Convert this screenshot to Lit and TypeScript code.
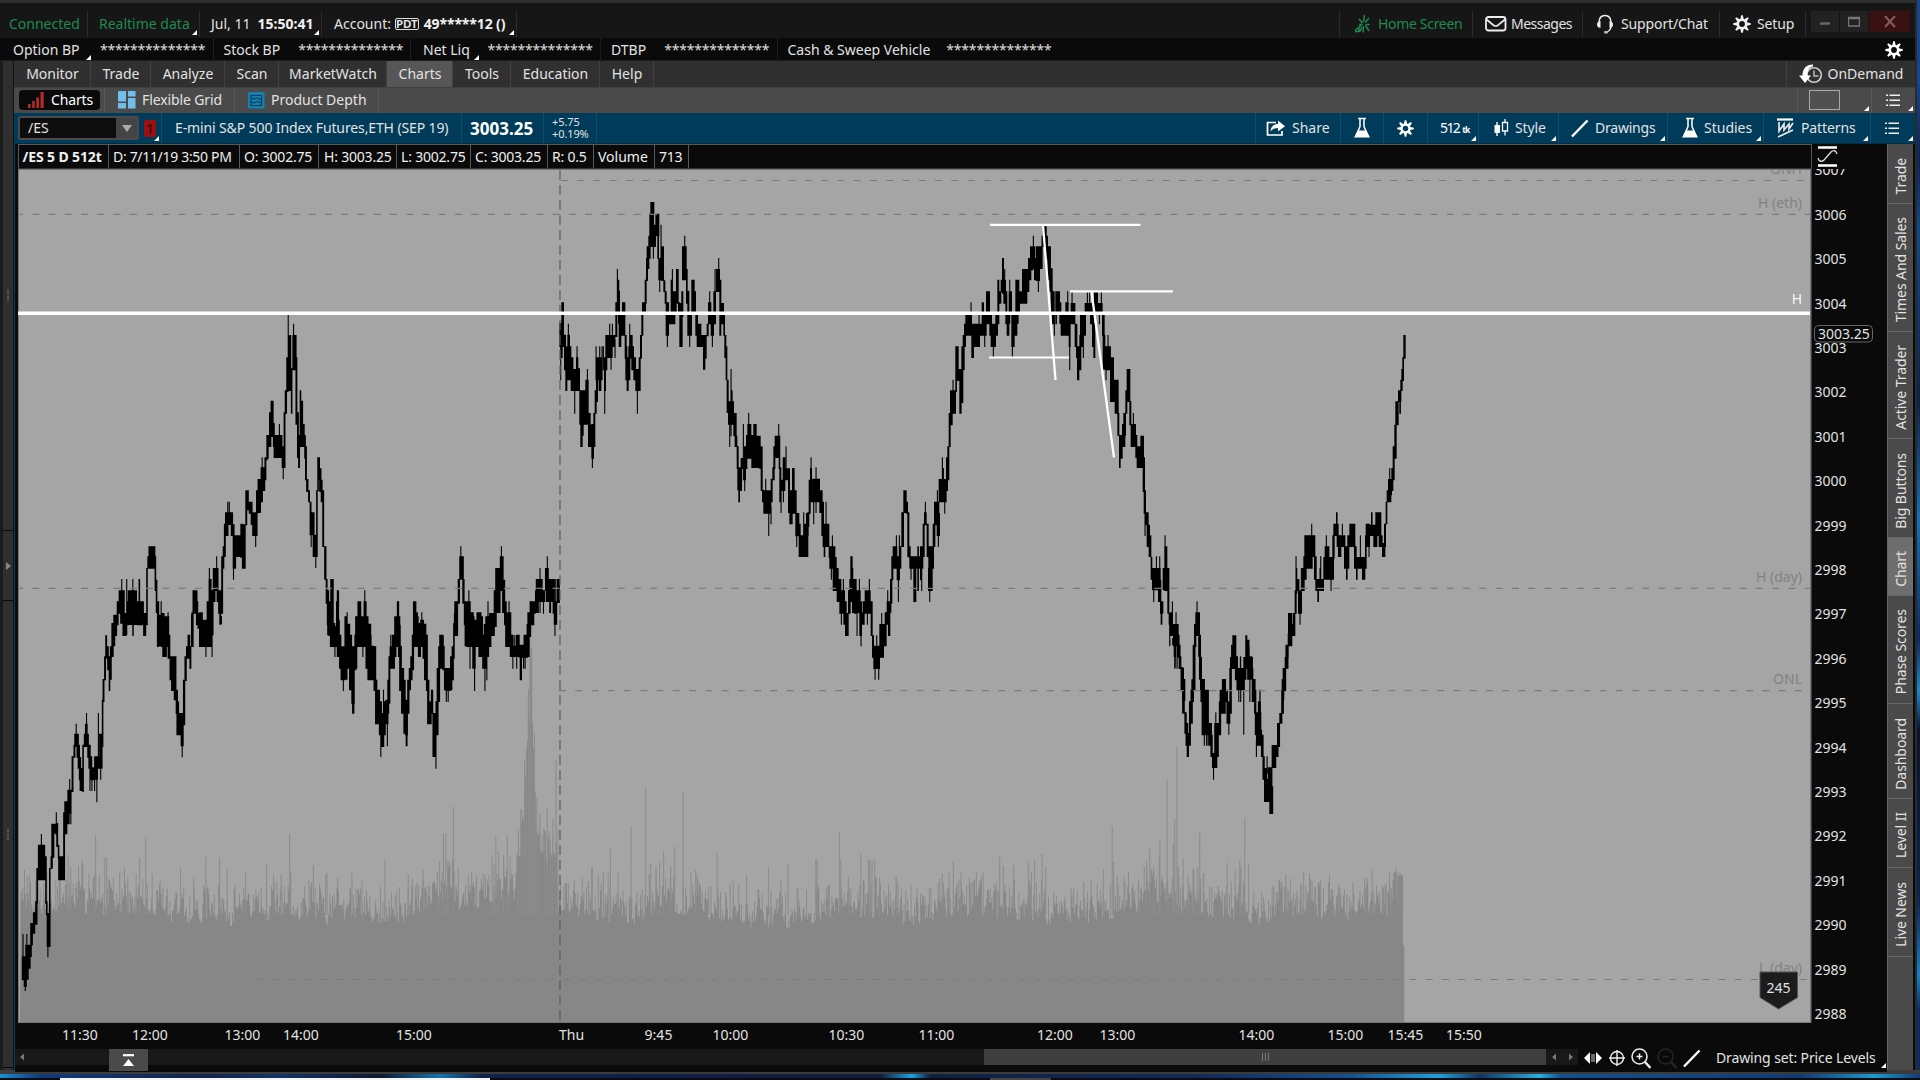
import { LitElement, html, svg, css, nothing } from "lit";
import { customElement } from "lit/decorators.js";

/* ---------- price trace ----------
   Each section has an origin and a scale; items are "x1 x2 top bottom" bars or "x top bottom" wicks. */
type Section = { ox: number; oy: number; sx: number; items: string };

const PRICE: Section[] = [
  { ox: 0, oy: 620, sx: 2.613, items: `60 943 1080,57 63 1010 1080,62 70 1010 1100,66 1010 1112,66 75 975 1078,70 943 1078,74 80 975 1045,79 86 910 975,79 82 910 1010,86 92 878 940,92 98 845 913,95 99 745 850,99 105 675 780,105 112 675 780,108 643 780,112 118 675 780,118 122 710 850,120 124 845 885,122 128 880 980,125 880 1011,128 132 745 980,132 138 710 745,134 142 612 712,142 147 612 640,147 578 645,147 152 610 680,151 155 675 715,152 170 710 780,165 170 578 715,168 176 545 642,176 182 510 612,182 478 540,181 187 510 580,185 560 612,187 192 410 515,192 197 375 412,194 203 342 380,199 312 380,200 206 342 412,203 209 375 445,206 212 412 480,208 218 445 512,215 219 375 515,219 223 342 380,222 229 312 380,226 280 380,228 232 342 412,231 237 375 445,235 241 410 480,235 445 512,238 247 443 480,240 445 512,247 445 512,246 256 410 478,253 445 546,254 262 412 445,257 280 445,259 268 342 445,263 420 478,266 270 240 380,268 273 178 245,272 277 110 180,275 280 47 115,280 284 80 150,284 288 110 212,287 292 80 178,291 297 10 110,296 305 -15 45,
  297 300 -15 78,320 329 0 46,330 0 20,334 372 0 14,348 0 46,374 382 0 46,410 424 -15 78,424 436 -10 110,436 442 -10 80,438 445 45 115,443 456 110 180,447 455 115 212,454 461 110 240,459 465 210 280,461 468 245 345,466 474 280 345,472 480 280 378,476 300 411,478 484 180 315,482 488 110 182,486 492 80 115,490 497 45 115,495 500 80 145,499 503 -15 80,520 542 0 78,538 20 110,540 548 -10 78,550 556 -10 46,554 0 110,573 580 -10 12,
  855 864 -10 45,862 872 -10 80,872 882 20 80,875 20 110,880 888 0 110,886 892 45 145,890 902 80 180,897 100 212,900 908 -10 178,905 915 12 145,912 920 45 210,918 927 80 250,920 926 100 280,926 931 45 150,928 936 -10 80,932 0 145,936 948 -10 80,945 957 -10 80,948 0 110,955 963 -10 145,960 970 12 180,968 978 78 180,976 983 80 212,980 986 180 312,986 993 210 312,990 998 245 345,995 280 410,996 1004 280 380,1002 210 300,1003 1008 245 345,1007 1015 240 312,1012 280 378,1012 1017 180 280,1015 1020 110 250,1018 1025 80 145,1021 45 100,1024 1032 45 145,1030 1036 -10 110,1035 1042 -10 20,1040 1046 -10 110,1043 1050 78 212,1048 1056 145 280,1054 1060 180 340,1058 1066 240 345,1060 1065 240 378,1064 1070 180 280,1068 1074 145 210,1072 1078 110 180,1076 1082 45 150,1080 1088 -10 45,1084 1094 -10 80,1092 1100 12 110,1098 1108 0 80,1104 1112 12 115,1108 1114 12 180,1113 1118 45 212,1116 1122 180 312,1120 1128 245 312,1126 1132 210 280,1130 1136 280 410,1134 1139 280 410,1139 300 445,1138 1143 245 345,1141 1146 145 345,1145 1150 80 245,1149 45 100,1150 1158 45 145,1156 1162 78 150,1160 1166 145 210,1164 1178 145 212,1166 200 245,1171 200 245,1176 1182 110 210,1180 1186 80 180,1184 1188 12 115,1186 1196 -20 45,1214 1228 -10 78,1222 1240 -10 80,1228 0 145,1234 1243 0 145,1240 80 212,1242 1252 0 80,1250 1262 -10 110,1260 1273 45 145,1267 100 212,1268 1278 -10 110,1272 80 180,1276 1284 -10 80,1284 1294 -10 15,1320 1328 -10 45,1326 1334 -10 80,1332 1342 45 110,1340 80 145,1338 1350 78 110,1350 80 145,1348 1358 45 110,1356 1374 75 112,1358 1364 100 180,1368 100 145,1368 1380 45 112,1372 45 145,1378 1384 12 110,1382 1394 -10 14,1450 0 46` },
  { ox: 0, oy: 180, sx: 2.613, items: `275 280 1367 1400,291 297 1333 1390,297 306 1333 1367,305 310 1265 1335,310 316 1232 1300,314 326 1232 1330,318 1198 1300,320 330 1300 1367,331 1198 1365,330 336 1265 1335,334 358 1232 1332,347 1198 1367,358 368 1265 1335,362 366 1198 1332,366 376 1265 1335,374 382 1300 1367,382 386 1165 1335,385 390 1130 1165,388 406 1100 1165,404 408 1130 1232,407 411 1200 1298,410 416 1265 1400,421 1265 1400,420 430 1300 1400,430 439 1333 1400,439 1298 1400,491 494 1367 1400,500 506 1298 1400,503 516 1232 1300,512 518 1265 1335,516 522 1300 1345,520 530 1298 1400,528 540 1330 1400,540 547 1265 1400,547 1165 1400,545 553 1198 1400,552 558 1232 1365,556 568 1165 1232,558 563 1165 1265,566 1130 1200,566 571 1165 1265,570 578 1232 1300,573 578 1265 1333,578 583 1130 1300,582 586 1100 1165,585 590 1032 1130,588 597 998 1067,595 966 1030,599 966 1030,597 606 998 1034,603 609 998 1067,608 613 1034 1165,610 1100 1198,612 629 1067 1130,612 617 1067 1165,628 634 1032 1132,632 642 1034 1165,641 646 932 1035,646 650 932 990,650 657 966 1000,655 660 966 1034,659 673 998 1067,668 1020 1100,669 674 932 1000,673 682 898 998,681 687 863 966,685 833 900,686 693 863 932,691 696 833 900,695 698 833 840,696 702 766 835,703 709 698 800,700 704 766 800,707 715 663 770,713 718 730 800,715 734 766 833,730 733 800,733 738 766 833,736 744 800 863,740 840 897,741 746 698 863,744 750 632 700,748 754 533 635,753 405 540,752 761 466 632,760 764 566 700,764 768 466 570,767 432 540,766 775 466 570,772 777 533 733,776 781 698 833,779 784 766 863,783 787 632 800,786 792 663 800,792 796 733 800,797 802 800 900,795 799 766 835,800 806 898 935,805 810 932 966,809 814 966 1065,813 1000 1100,812 822 998 1065,817 828 1065 1130,825 1100 1163,826 830 932 1130,829 832 833 932,834 840 866 935,838 843 900 966,842 847 932 1100,832 836 833 900,847 853 1100 1198,851 856 1198 1270,854 860 1232 1335,858 864 1265 1367,863 872 1198 1365,866 872 1198 1400,870 876 1330 1400,880 886 1232 1370,878 884 1265 1400,886 889 1365 1400,900 914 1365 1400,907 1298 1400,905 912 1333 1400,928 934 1365 1400,934 944 1265 1400,944 950 1330 1400,953 1232 1400,950 958 1265 1400,957 963 1333 1400,966 971 1367 1400,1021 1367 1400,1033 1037 1333 1400,1037 1043 1265 1400,1043 1046 1335 1400,1079 1088 1265 1400,1086 1092 1298 1400,1090 1108 1330 1400,1102 1298 1400,1106 1110 1333 1400,1110 1116 1365 1400,1148 1151 1367 1400,1158 1367 1400,1184 1188 1330 1400,1187 1197 1265 1367,1196 1202 1198 1270,1200 1212 1130 1198,1204 1100 1150,1208 1214 1198 1270,1212 1220 1265 1335,1218 1230 1265 1400,1225 1232 1300,1230 1238 1298 1400,1236 1246 1335 1400,1245 1258 1298 1400,1256 1265 1365 1400,1264 1275 1333 1400,1275 1265 1400,1278 1293 1300 1367,1290 1298 1232 1340,1294 1308 1165 1298,1306 1316 1130 1232,1310 1100 1165,1312 1320 1200 1298,1317 1324 1265 1335,1320 1336 1298 1400,1330 1265 1330,1345 1367 1400,1350 1367 1400,1368 1375 1367 1400,1376 1382 1333 1400,1378 1388 1298 1370,1384 1396 1265 1335,1390 1400 1265 1300,1398 1424 1232 1265,1400 1408 1198 1298,1411 1165 1298,1406 1418 1198 1265,1420 1232 1300,1424 1434 1165 1232,1430 1130 1200,1426 1448 1198 1265,1435 1440 1198 1298,1444 1450 1198 1300,1447 1456 1265 1333,1450 1300 1367,1452 1198 1265,1455 1463 1198 1268` },
  { ox: 520, oy: 180, sx: 3, items: `118 126 430 500,122 128 500 533,122 430 600,124 132 368 500,132 138 465 570,136 142 500 632,142 150 465 600,145 432 500,149 154 500 600,152 160 533 632,158 168 568 632,164 600 700,168 175 533 632,171 500 600,172 180 566 632,178 184 632 733,181 188 632 800,186 191 632 766,190 206 632 733,196 206 600 640,202 568 650,204 212 700 800,210 226 735 800,214 222 733 835,217 800 863,220 226 700 800,224 230 632 700,228 234 533 665,228 500 600,232 246 533 600,236 244 570 632,239 500 600,246 500 600,250 500 570,252 258 533 632,254 570 700,256 262 466 570,260 286 466 500,262 278 466 533,269 432 500,277 432 500,273 500 568,285 480 533,286 292 368 470,292 268 400,293 297 300 400,294 300 333 430,296 304 400 500,302 308 400 466,306 316 368 466,314 320 466 535,316 322 500 600,320 326 533 632,325 331 500 600,329 432 535,329 338 466 535,334 342 500 570,340 348 533 600,346 352 568 632,352 570 700,350 360 568 632,356 362 533 632,360 366 466 535,364 370 400 466,366 378 368 400,374 380 300 370,378 384 235 302,380 388 200 266,385 392 168 235,388 402 102 200,391 403 67 102,400 180 235,402 408 135 200,406 418 102 168,412 417 102 235,415 424 235 300,419 270 335,423 135 300,424 432 200 302,430 436 302 335,434 440 335 370,437 447 368 466,442 430 500,446 466 400 432,452 456 300 432,457 268 432,458 470 335 400,468 476 268 370,474 480 368 400,478 488 400 500,480 483 370 410,484 490 335 410,486 500 200 300,494 168 230,498 503 268 370,502 508 333 466,509 400 500,506 516 400 466,514 524 300 400,522 528 335 400,526 534 400 466,530 544 432 500,540 556 466 500,549 556 500 568,555 560 466 535,560 566 432 468,564 574 368 432,569 335 400,572 582 400 466,577 430 500,580 588 335 432,585 268 400,588 600 268 335,596 235 300,598 604 300 466,602 612 370 432,610 615 400 466,613 619 466 533,617 622 500 600,620 626 600 698,624 642 665 733,633 568 700,636 632 700,629 700 800,633 700 768,640 650 700 768,644 652 768 800,650 656 800 866,652 660 863 930,655 660 900 966,660 666 863 932,662 682 835 866,670 733 900,672 678 800 900,674 850 932,678 694 766 835,682 694 733 835,686 700 770,694 710 766 863,700 710 733 863,708 722 768 863,718 724 800 866,722 728 800 932,726 732 930 966,730 754 932 1000,737 897 960,746 970 1067,753 980 1032,752 758 897 966,757 764 863 900,760 766 800 866,764 778 768 833,776 733 800,776 780 768 866,778 784 863 966,783 900 998,784 794 900 932,788 796 833 932,790 900 966,794 810 866 900,798 800 900,804 810 866 998,808 818 932 1032,816 824 865 1000,822 830 932 1000,826 838 1000 1068,830 1050 1100,836 842 1032 1130,840 860 1067 1130,851 998 1130,852 866 1032 1067,858 865 1000 1130,862 868 998 1040,866 872 900 1000,870 876 865 966,873 833 900,874 900 897 966,881 940 1032,888 863 998,898 908 932 998,904 912 966 1067,908 928 1032 1100,911 915 1060 1130,918 966 1100,926 946 1100 1132,928 940 1100 1165,934 1150 1198,937 1067 1130,938 950 1132 1232,946 956 1165 1232,950 964 1198 1265,958 975 1232 1300,964 1280 1333,970 1198 1260,970 980 1265 1333,975 986 1300 1367,984 992 1232 1300,988 1002 1198 1265,991 998 1130 1200,998 1165 1200,996 1022 1232 1298,1002 1010 1198 1300,1011 1280 1367,1018 1198 1300,1018 1034 1298 1333,1018 1026 1265 1367,1023 1350 1398,1028 1054 1265 1300,1034 1052 1232 1270,1042 1290 1333,1048 1198 1240,1052 1058 1265 1367,1056 1062 1367 1432,1060 1080 1398 1466,1065 1450 1498,1070 1367 1420,1076 1450 1498,1078 1092 1333 1432,1085 1300 1340,1090 1100 1333 1398,1094 1106 1298 1333,1100 1114 1265 1298,1103 1232 1290,1104 1111 1298 1367,1110 1117 1198 1270,1114 1120 1130 1200,1118 1132 1100 1165,1129 1067 1120,1130 1138 1130 1200,1135 1180 1265,1138 1067 1200,1138 1144 1100 1165,1144 1152 998 1100,1150 1160 932 998,1158 1164 966 1000,1162 1168 998 1130,1166 1172 1100 1132,1168 1200 1130 1165,1173 1150 1198,1180 1189 1165 1265,1192 1196 1100 1232,1200 1206 1132 1200,1200 1210 1100 1165,1205 1165 1232,1208 1214 1032 1130,1212 1220 998 1035,1216 966 1010,1220 1226 1032 1130,1224 1238 1165 1232,1225 1242 1100 1165,1229 1200 1265,1238 1246 1032 1100,1242 1258 966 1035,1252 932 1000,1250 1260 1000 1067,1255 1050 1100,1256 1280 898 966,1267 833 900,1274 950 1000,1270 865 920,1278 1284 833 932,1282 1288 800 900,1286 1292 700 800,1290 1298 632 735,1296 1308 632 700,1299 600 660,1306 1316 500 600,1306 1309 600 635,1312 1326 568 602,1318 1325 600 700,1324 1330 500 668,1328 1334 466 570,1332 1338 432 500,1336 1356 400 466,1353 368 420,1354 1362 432 533,1360 1380 432 500,1377 400 466,1380 1390 432 466,1385 1392 368 432,1390 1400 400 466,1394 430 500,1398 1410 335 432,1408 1416 400 466,1412 1428 432 500,1420 470 530,1426 1434 400 466,1432 1438 300 432,1438 1444 335 370,1442 1458 300 335,1446 1452 235 340,1454 268 370,1450 1462 335 370,1456 1462 368 432,1460 1468 400 466,1469 300 430,1466 1476 335 400,1474 1484 400 500,1477 470 530,1482 1492 400 466,1486 1496 300 430` },
  { ox: 940, oy: 180, sx: 3, items: `216 228 400 466,226 238 300 400,232 246 335 370,238 350 400,244 260 335 368,246 262 268 370,256 268 268 335,264 274 235 300,270 280 200 270,280 168 240,278 286 200 266,282 292 235 300,288 300 200 302,295 280 335,298 308 200 266,306 168 240,308 320 140 200,318 324 168 235,322 330 200 300,328 332 200 335,332 338 266 400,336 344 335 432,343 400 466,346 350 400 432,346 360 335 400,358 364 368 430,362 392 400 466,376 386 368 410,383 335 420,386 392 430 500,389 460 570,392 406 370 432,396 335 400,404 412 432 500,408 420 500 533,411 418 530 600,418 424 466 570,420 430 400 500,430 440 533,430 438 400 466,434 455 370 400,442 335 400,449 335 400,450 462 370 432,456 466 430 500,460 466 460 533,462 474 335 400,472 488 370 400,484 335 400,478 400 432,486 494 400 466,488 496 466 568,496 508 500 570,504 466 570,498 550 600,508 512 500 570,510 522 533 665,518 536 600 665,524 536 600 700,532 538 700 766,537 542 766 863,540 548 766 835,546 556 733 800,550 558 700 766,556 562 632 700,560 571 568 665,568 574 665 735,572 578 733 800,576 588 733 800,580 700 760,586 592 766 833,590 602 800 863,601 612 768 863,608 615 833 935,611 618 932 1000,615 990 1067,616 626 998 1035,620 630 1035 1100,626 634 1067 1130,632 637 1132 1198,636 662 1165 1230,649 1130 1200,659 1130 1200,641 1200 1265,654 664 1200 1265,660 670 1265 1300,662 667 1290 1333,668 686 1165 1230,673 682 1100 1232,675 1067 1130,682 688 1165 1300,686 698 1300 1333,690 698 1298 1367,689 1330 1398,697 1265 1330,696 716 1333 1367,699 716 1360 1398,704 1390 1465,711 1390 1465,708 1298 1340,714 718 1365 1432,716 724 1432 1466,722 732 1465 1498,726 736 1498 1562,754 762 1500 1562,758 764 1398 1530,762 768 1333 1400,766 780 1298 1367,771 1265 1310,778 783 1365 1432,780 786 1432 1530,784 792 1498 1562,793 1498 1562,790 806 1533 1562,842 862 1530 1562,849 858 1498 1562,868 873 1465 1560,870 880 1432 1466,877 889 1367 1466,886 894 1465 1500,892 914 1465 1530,901 1432 1500,910 918 1432 1466,916 922 1367 1466,922 929 1398 1466,924 940 1466 1498,937 1432 1498,936 946 1498 1562,960 1533 1562,1025 1032 1498 1562,1028 1038 1465 1533,1034 1042 1432 1465,1040 1046 1398 1432,1044 1056 1300 1398,1052 1064 1333 1367,1058 1066 1300 1367,1064 1070 1232 1300,1068 1130 1240,1070 1165 1240,1070 1078 1198 1232,1074 1086 1232 1300,1080 1290 1333,1084 1165 1265,1086 1094 1165 1232,1090 1100 1130 1198,1093 1100 1067 1150,1098 1118 1067 1165,1115 1032 1100,1114 1126 1067 1130,1122 1130 1130 1198,1126 1152 1198 1232,1132 1137 1220 1265,1140 1165 1220,1142 1130 1220,1150 1158 1132 1198,1154 1168 1100 1198,1159 1067 1120,1166 1182 1132 1198,1173 1180 1232,1177 1184 1067 1135,1180 1196 1032 1067,1188 1192 998 1060,1190 1216 1067 1100,1194 1204 1080 1130,1207 1032 1100,1212 1222 1100 1165,1218 1222 1150 1198,1222 1228 1067 1165,1224 1246 1067 1100,1228 1246 1032 1100,1242 1250 1100 1165,1248 1252 1140 1198,1248 1278 1132 1165,1261 1067 1150,1266 1276 1150 1198,1275 1280 1067 1165,1277 1290 1032 1100,1287 1080 1130,1286 1324 1035 1067,1293 1297 998 1060,1300 1312 1067 1100,1306 1324 998 1067,1316 1328 1067 1100,1326 1336 1090 1130,1332 1338 1032 1100,1337 1342 966 1032,1340 1354 932 966,1344 1356 898 945,1354 1360 865 932,1349 865 930,1358 1364 800 900,1363 1370 735 835,1366 1376 665 735,1374 1384 632 665,1378 1382 650 700,1381 1388 600 632,1384 1392 568 602,1387 1392 533 600,1390 1397 466 535` },
  { ox: 1140, oy: 640, sx: 2.613, items: `78 0 15,84 96 -5 15,88 94 0 50,92 20 82,97 20 82,98 106 15 50,102 108 50 85,106 113 82 150,110 117 150 220,116 122 218 280,119 126 250 316,122 128 280 350,128 133 185 316,132 138 150 250,135 141 118 185,138 145 15 150,143 147 -10 20,152 158 -10 50,154 160 50 118,158 164 118 185,161 168 150 285,168 118 285,166 180 150 220,166 180 215 285,168 260 316,174 260 316,178 260 316,180 188 250 316,184 190 285 350,188 202 340 383,192 370 418,194 206 250 350,198 218 280,206 212 185 285,208 214 150 220,214 224 118 220,222 230 150 185,226 236 185 250,232 240 283,234 240 85 220,238 244 15 85,242 251 -10 85,248 256 50 118,252 274 85 150,258 120 185,263 50 185,271 140 283,270 278 85 118,275 286 0 85,280 293 50 118,287 100 185,292 302 118 185,298 304 150 220,300 317 218 285,308 316 185 285,313 150 200,303 319 270 316,304 300 350,316 323 285 350,320 326 350 418,324 332 385 485,332 350 400,328 336 418 485,334 346 383 485,338 348 440 521,344 350 316 383,346 356 350 383,346 362 316 350,358 366 250 320,364 372 220 250,369 376 150 220,371 377 118 180,375 382 85 150,380 388 15 85,386 398 -20 16` },
];

const toRects = (s: Section) =>
  s.items
    .split(",")
    .map((raw) => {
      const n = raw.trim().split(/\s+/).map(Number);
      const wick = n.length === 3;
      const x1 = s.ox + n[0] / s.sx - (wick ? 0.5 : 0);
      const w = wick ? 1.1 : Math.max(1.6, (n[1] - n[0]) / s.sx);
      const t = s.oy + n[n.length - 2] / 3 - 0.3;
      const b = s.oy + n[n.length - 1] / 3 + 0.3;
      return `M${x1.toFixed(2)} ${t.toFixed(2)}h${w.toFixed(2)}V${b.toFixed(2)}h${(-w).toFixed(2)}z`;
    })
    .join("");

/* ---------- volume ---------- */
const ENVELOPE: [number, number][] = [
  [20, 903], [100, 900], [160, 908], [230, 912], [270, 908], [330, 910], [400, 910], [430, 905], [442, 888], [456, 895], [485, 898],
  [500, 885], [515, 890], [519, 862], [524, 830], [526.5, 748], [528.5, 715], [529.5, 650], [531.5, 650], [532, 748], [534, 748],
  [535.5, 835], [541, 853], [556, 855], [557.5, 905], [640, 910], [645, 900], [680, 900], [720, 914], [800, 914], [840, 900], [880, 905],
  [930, 916], [945, 903], [1000, 905], [1050, 911], [1090, 910], [1150, 895], [1190, 900], [1230, 905], [1260, 912], [1300, 905], [1340, 908], [1380, 903], [1396, 900], [1397, 875], [1403, 876],
];
const SPIKES: { ox: number; oy: number; sx: number; pts: [number, number][] }[] = [
  { ox: 0, oy: 620, sx: 2.613, pts: [[77, 768], [178, 705], [185, 738], [250, 645], [274, 712], [279, 712], [313, 755], [334, 775], [356, 762], [365, 715], [381, 650], [398, 762], [472, 742], [506, 772], [538, 710], [574, 712], [594, 745], [642, 755], [697, 732], [715, 765], [735, 762], [757, 642], [760, 752], [819, 735], [851, 765], [855, 760], [920, 760], [946, 780], [1006, 720], [1067, 765], [1078, 778], [1106, 748], [1143, 755], [1149, 725], [1159, 640], [1165, 640], [1170, 722], [1185, 560], [1198, 745], [1246, 765], [1286, 705], [1291, 732], [1296, 650], [1303, 695], [1316, 705], [1326, 645], [1333, 708], [1355, 627], [1361, 567], [1366, 632], [1371, 418], [1376, 388], [1381, 208], [1385, -60], [1387, 90], [1393, 383], [1398, 540], [1403, 533], [1411, 582], [1423, 630], [1430, 562], [1438, 660], [1445, 595], [1453, 420], [1458, 628], [1478, 790], [1548, 742]] },
  { ox: 540, oy: 720, sx: 2.24, pts: [[116, 443], [131, 468], [142, 455], [153, 458], [158, 387], [175, 455], [204, 320], [237, 200], [248, 430], [260, 440], [268, 425], [277, 395], [293, 438], [302, 380], [321, 213], [349, 450], [378, 498], [397, 402], [433, 484], [463, 465], [512, 443], [540, 478], [556, 432], [578, 505], [618, 417], [621, 420], [646, 507], [671, 335], [674, 418], [691, 468], [719, 402], [736, 417], [739, 420], [744, 420], [750, 417], [761, 472], [798, 470], [901, 462], [917, 460], [926, 425], [943, 458], [993, 458], [1030, 410], [1038, 438], [1061, 436], [1094, 428], [1101, 455], [1108, 417], [1125, 402], [1133, 438], [1218, 485], [1262, 447], [1282, 320], [1285, 425], [1293, 466], [1308, 470], [1341, 480], [1359, 425], [1366, 383], [1375, 440], [1387, 410], [1389, 360], [1405, 180], [1419, 370], [1422, 297], [1427, 80], [1430, 438], [1441, 413], [1463, 448], [1473, 440], [1478, 338], [1487, 458]] },
  { ox: 1140, oy: 640, sx: 2.613, pts: [[126, 708], [141, 688], [151, 680], [166, 700], [182, 740], [188, 740], [215, 752], [228, 668], [249, 690], [261, 660], [264, 682], [274, 533], [284, 672], [323, 772], [356, 755], [372, 738], [381, 703], [387, 750], [410, 752], [423, 730], [428, 695], [437, 762], [446, 718], [457, 740], [472, 718], [502, 760], [519, 732], [522, 742], [552, 785], [587, 714], [590, 742], [607, 687], [611, 752], [637, 744], [654, 742], [658, 745], [670, 683], [676, 695], [682, 700]] },
];

const volumePath = (): string => {
  let seed = 9173;
  const rnd = () => ((seed = (seed * 16807) % 2147483647) / 2147483647);
  let d = "M20 1022";
  let k = 0;
  let swing = 0;
  for (let x = 20.6; x < 1403; x += 0.87) {
    while (k < ENVELOPE.length - 2 && ENVELOPE[k + 1][0] < x) k++;
    const [xa, ya] = ENVELOPE[k];
    const [xb, yb] = ENVELOPE[k + 1];
    const base = ya + ((yb - ya) * (x - xa)) / (xb - xa);
    const quiet = x > 1396;
    swing = swing * 0.72 + (rnd() - 0.5) * 14;
    const top = quiet ? base : Math.min(base + 14, base + 8 + swing - Math.pow(rnd(), 1.7) * 34);
    d += `L${x.toFixed(2)} ${top.toFixed(1)}h.87`;
  }
  return d + "L1403 945H1404.3V1022z";
};
const spikePath = SPIKES.map((s) =>
  s.pts.map(([x, y]) => `M${(s.ox + x / s.sx - 0.1).toFixed(2)} ${(s.oy + y / 3).toFixed(1)}V915`).join("")
).join("");

const PRICE_PATH = PRICE.map(toRects).join("");
const VOLUME_PATH = volumePath();

const PRICES = Array.from({ length: 20 }, (_, i) => 3007 - i);
const TIMES: [string, number][] = [
  ["11:30", 80], ["12:00", 150], ["13:00", 242.5], ["14:00", 301], ["15:00", 414], ["Thu", 571.5], ["9:45", 658.5], ["10:00", 730.5],
  ["10:30", 846.5], ["11:00", 936.5], ["12:00", 1055], ["13:00", 1117.5], ["14:00", 1256.5], ["15:00", 1345.5], ["15:45", 1405.5], ["15:50", 1464],
];

/* ---------- icons ---------- */
const gear = (c = "#f2f2f2", bg = "#161616", size = 18) => html`<svg width=${size} height=${size} viewBox="-9 -9 18 18">
  <g fill=${c}>${[0, 45, 90, 135, 180, 225, 270, 315].map((a) => svg`<path d="M-1.900-4L-.8-8.800H.8L1.900-4z" transform="rotate(${a})"></path>`)}</g>
  <circle r="5.300" fill=${c}></circle><circle r="2.900" fill=${bg}></circle></svg>`;
const flask = html`<svg width="18" height="22" viewBox="0 0 18 22"><path d="M5 1.500h8M7 2v7.500L3 18.500h12L11 9.500V2" fill="none" stroke="#fff" stroke-width="1.500"></path><path d="M5 13.500h8l4 7H1z" fill="#fff"></path></svg>`;
const list = html`<svg width="15" height="13" viewBox="0 0 15 13"><g fill="#f0f0f0"><path d="M0 .5h2v1.500H0zM0 5.500h2V7H0zM0 10.500h2V12H0zM3.500.5H14v1.500H3.500zM3.500 5.500H14V7H3.500zM3.500 10.500H14V12H3.500z"></path></g></svg>`;
const icons = {
  home: html`<svg width="17" height="20" viewBox="0 0 17 20" fill="none" stroke="#1f8a50" stroke-width="1.500"><path d="M10.500 1L9.500 8M15 4l-4 4.500M5 5l3.500 4M15.500 10.500H11.500M1 16.500L8.500 10M9.500 12l-.5 6.500M11.500 11.500l3.500 5.500M1 17.500h4M5 14v4M8 13l-2.500 5M5 10.500h3"></path></svg>`,
  mail: html`<svg width="22" height="16" viewBox="0 0 22 16"><rect x="1" y="1" width="19.500" height="13.500" rx="2.500" fill="none" stroke="#eee" stroke-width="1.800"></rect><path d="M1.500 3.500L8.500 9.200Q10.800 10.800 13 9.200L20 3.500" fill="none" stroke="#eee" stroke-width="1.700"></path></svg>`,
  headset: html`<svg width="18" height="20" viewBox="0 0 18 20"><path d="M3 9C3 4 5.500 1.500 9 1.500S15 4 15 9M15 13c-.5 3-2.500 4.800-6 5.300" fill="none" stroke="#eee" stroke-width="1.500"></path><path d="M4.500 7v7Q1 13.500 1 10.500T4.500 7zM13.500 7v7q3.500-.5 3.500-3.500T13.500 7z" fill="#eee"></path><rect x="8" y="17" width="4" height="2.500" rx="1" fill="#bbb"></rect></svg>`,
  demand: html`<svg width="24" height="20" viewBox="0 0 24 20"><circle cx="15" cy="11" r="7.300" fill="none" stroke="#ccc" stroke-width="1.600"></circle><path d="M15 6.500V12h4.500" fill="none" stroke="#bbb" stroke-width="1.500"></path><path d="M14 .5C7 .5 3.500 5 3.500 11.500H0L6 19l6-7.500H8.500C8.500 6.500 9.500 3 14 2.500z" fill="#fff"></path></svg>`,
  bars: html`<svg width="17" height="18" viewBox="0 0 17 18" fill="#b52a2c"><path d="M0 13h2.500v4H0zM4.200 10h2.500v7H4.200zM8.300 6.500h2.600V17H8.300zM12.500 1h3.200v16h-3.200z"></path></svg>`,
  grid: html`<svg width="18" height="18" viewBox="0 0 18 18" fill="#72bdea"><path d="M0 0h8v10.500H0zM0 12h8v5.500H0zM10 0h7.500v5.500H10zM10 7h7.500v10.500H10z"></path></svg>`,
  depth: html`<svg width="17" height="17" viewBox="0 0 17 17"><rect width="16.500" height="16.500" rx="1" fill="#157fb2"></rect><path d="M3 3.500h10.500v10H3zM3 6l3 1 3-1 4 1.500M3 10l3 1 3-1.500 4 1" fill="none" stroke="#0a3c58" stroke-width="1.100"></path></svg>`,
  share: html`<svg width="20" height="18" viewBox="0 0 20 18"><path d="M10 3.500H1.500v12.500H16V12" fill="none" stroke="#fff" stroke-width="1.700"></path><path d="M4.500 12.500C5 7 8 5 12 5V1.500l7 5.700-7 5.300V9C9 9 6.500 9.500 4.500 12.500z" fill="#fff"></path></svg>`,
  style: html`<svg width="17" height="18" viewBox="0 0 17 18"><path d="M4 3v14" stroke="#fff" stroke-width="1.400"></path><rect x="1.500" y="6" width="5.500" height="8" fill="#fff"></rect><path d="M12 0v3.500M12 12v4.500M9.500 3.500h5V12h-5z" fill="none" stroke="#fff" stroke-width="1.300"></path></svg>`,
  line: html`<svg width="18" height="19" viewBox="0 0 18 19"><path d="M1 17.500L16.500 1.500" stroke="#fff" stroke-width="2.400"></path></svg>`,
  patterns: html`<svg width="19" height="20" viewBox="0 0 19 20"><path d="M1 1.500h16" stroke="#fff" stroke-width="2.200"></path><path d="M3 4v9l5-7v6l5-6v5l4-6M2 19L17 12" fill="none" stroke="#e8e8e8" stroke-width="1.700"></path></svg>`,
};

interface Cell { w: number; pad?: number; body?: unknown; tri?: boolean; cls?: string }

@customElement("app-root")
export class AppRoot extends LitElement {
  static styles = css`
    :host { display: block; width: 1920px; height: 1080px; overflow: hidden; background: #0a0a0a; color: #e2e2e2; font: 14px/1 "Noto Sans", "Open Sans", sans-serif; }
    * { box-sizing: border-box; }
    svg { display: block; flex: none; }
    .frame { display: flex; height: 1070px; }
    .window { width: 1915px; display: flex; flex-direction: column; background: #0a0a0a; }
    .edge { width: 5px; background: linear-gradient(90deg, #2a2a2a 0 2px, transparent 2px), linear-gradient(#17468a 0 80px, #0e2350 160px, #154a86 230px, #0e2144 400px, #1b6fb0 520px, #0d2a5c 640px, #2089c4 690px, #0a1530 730px, #0d2450 900px, #1c7fc0 975px, #0e2c60 1010px); }
    .row { display: flex; flex: none; white-space: pre; }
    .cell { display: flex; align-items: center; flex: none; position: relative; border-right: 1px solid #2b2b2b; gap: 7px; height: 100%; }
    .cell.plain { border-right: 0; }
    .fill { flex: 1; }
    .tri::after { content: ""; position: absolute; right: 2px; bottom: 2px; border-left: 5px solid transparent; border-bottom: 5px solid #fff; }
    .title { height: 38px; background: #161616; border-top: 3px solid #2f2f2f; padding-top: 8px; padding-bottom: 1px; }
    .green { color: #1f8a50; }
    .t1 { letter-spacing: -.12px; }
    .t2 { letter-spacing: -.22px; }
    .t3 { letter-spacing: -.32px; }
    .t5 { letter-spacing: -.5px; }
    b { font-weight: 700; color: #f0f0f0; }
    .pdt { border: 1.500px solid #ddd; border-radius: 2px; font-size: 11.500px; line-height: 10.500px; font-weight: 600; color: #eee; margin: 0 -2px 0 -3px; }
    .wins { display: flex; gap: 1px; padding-left: 5px; width: 109px; height: 21px; }
    .win { width: 28px; background: #222; color: #777; display: grid; place-items: center; }
    .win.close { width: 41px; background: #391112; color: #8a5a5a; }
    .balance { height: 23px; background: #0a0a0a; border-bottom: 1px solid #1c1c1c; }
    .balance .cell { border-color: #1d1d1d; height: 24px; }
    .balance .tri::after { bottom: 2px; right: 1px; }
    .stars { letter-spacing: -.2px; color: #ddd; }
    .body { display: flex; flex: 1; min-height: 0; }
    .gutter { width: 14px; flex: none; background: #2f2f2f; border-left: 3px solid #1b1b1b; border-right: 1px solid #111; display: flex; flex-direction: column; align-items: center; }
    .gutter .zone { width: 100%; display: grid; place-items: center; border-bottom: 1px solid #0a0a0a; flex: none; }
    .grip { width: 2px; height: 11px; background: repeating-linear-gradient(#666 0 1px, transparent 1px 2px); }
    .main { flex: 1; display: flex; flex-direction: column; min-width: 0; }
    .menu { height: 26px; background: #303030; }
    .menu .cell { justify-content: center; border-color: #424242; padding-bottom: 1px; }
    .menu .on { background: #565656; }
    .sub { height: 26px; background: #4a4a4a; border-top: 1px solid #404040; }
    .sub .cell { border-color: #5a5a5a; padding-bottom: 1px; }
    .pill { display: flex; align-items: center; gap: 6px; background: #0a0a0a; border-radius: 4px; width: 81px; height: 20px; padding-left: 9px; color: #fff; letter-spacing: -.15px; }
    .box { width: 31px; height: 20px; border: 1px solid #aaa; background: #505050; margin-right: 20px; }
    .tool { height: 31px; background: #003b5a; border-bottom: 1px solid #003048; }
    .tool .cell { border-color: #124d6c; }
    .symbol { display: flex; width: 121px; height: 24px; background: #0d0d0d; border: 2px solid #4a4a4a; border-radius: 3px; padding-left: 8px; align-items: center; justify-content: space-between; }
    .drop { width: 21px; height: 20px; background: #444; display: grid; place-items: center; }
    .alert { width: 12px; height: 17px; background: #9b1111; border-radius: 2px; color: #3a0a0a; text-align: center; line-height: 17px; font-size: 15px; }
    .last { font-size: 17px; color: #fff; }
    .change { display: grid; font-size: 11px; line-height: 12px; letter-spacing: -.1px; }
    .tick { font-size: 14px; color: #fff; letter-spacing: -1.600px; }
    .tick small { font-size: 8.500px; font-weight: 700; letter-spacing: -.8px; margin-left: 3px; }
    .work { flex: 1; display: flex; min-height: 0; }
    .chartcol { width: 1873px; display: flex; flex-direction: column; border-left: 1px solid #00405f; }
    .status { height: 25px; margin-left: 3px; width: 1794px; background: #0a0a0a; border: 1px solid #5a5a5a; border-bottom-color: #333; letter-spacing: -.2px; }
    .status .cell { border-color: #5a5a5a; color: #eee; }
    .plot { display: block; margin-top: -25px; margin-left: -15px; }
    .plot text { font-family: "Noto Sans", sans-serif; font-size: 14px; fill: #e2e2e2; }
    .plot .lvl { fill: #828282; text-anchor: end; }
    .plot .lvl.hot { fill: #f8f8f8; }
    .plot .mid { text-anchor: middle; }
    .foot { height: 23px; background: #0a0a0a; padding-bottom: 2px; }
    .track { display: flex; align-items: flex-start; width: 1563px; height: 16px; background: #181818; }
    .lift { width: 39px; height: 22px; margin-left: 85px; background: #4a4a4a; display: grid; place-items: center; position: relative; }
    .thumb { width: 562px; height: 16px; background: #3f3f3f; margin-left: 836px; display: grid; place-items: center; }
    .controls { display: flex; align-items: center; gap: 6px; height: 18px; width: 308px; position: relative; }
    .controls.tri::after { right: 0; bottom: -1px; }
    .side { width: 26px; background: #4a4a4a; border-left: 1px solid #666; }
    .side .tab { display: grid; place-items: center; padding-top: 5px; border-bottom: 1px solid #666; letter-spacing: -.08px; }
    .side .tab span { writing-mode: vertical-rl; transform: rotate(180deg); white-space: nowrap; }
    .side .on { background: #6e6e6e; }
    .desk { height: 10px; border-top: 4px solid #3c3c3c; background: linear-gradient(90deg, #1b8fd0, #123a7a 40px, #12244a 200px, #123468 280px, #10182e 380px, #1673b0 440px, #10224a 480px, #0f1c3c 880px, #18a4e0 912px, #10203f 930px, #122a58 1200px, #155090 1350px, #1fa0da 1440px, #12345e 1480px, #28b0e0 1540px, #145090 1560px, #123a72 1800px, #1c9ad0 1875px, #123a70); }
    .strip { height: 2px; margin-top: 4px; background: linear-gradient(90deg, #0a0a12 60px, #f5f5f5 60px 490px, #0a0a12 490px 990px, #444 990px 1051px, #0a0a12 1051px); }
  `;

  private cells(list: Cell[]) {
    return list.map(
      (c) => html`<div class="cell ${c.tri ? "tri" : ""} ${c.cls ?? ""}" style="width:${c.w}px;padding-left:${c.pad ?? 0}px">${c.body ?? nothing}</div>`
    );
  }

  private star(gap: number) {
    return html`<span class="stars" style="margin-left:${gap}px">**************</span>`;
  }

  private plot() {
    const y = (p: number) => 219.7 + (3006 - p) * 44.4;
    return svg`
      <defs>
        <clipPath id="area"><rect x="18" y="170" width="1793" height="853"></rect></clipPath>
        <clipPath id="axis"><rect x="1811" y="169" width="80" height="860"></rect></clipPath>
      </defs>
      <rect x="18" y="169" width="1793.500" height="854" fill="#777"></rect>
      <rect x="19" y="170" width="1791" height="852" fill="#a5a5a5"></rect>
      <g clip-path="url(#area)">
        <path d=${VOLUME_PATH} fill="#878787"></path>
        <path d=${spikePath} stroke="#8d8d8d" stroke-width="1.100" fill="none"></path>
        <path d=${PRICE_PATH} fill="#000"></path>
        <g fill="none" stroke="#7c7c7c" stroke-width="1.200" stroke-dasharray="7 9.260">
          <path d="M560 180.500H1810" stroke-dashoffset="-1"></path>
          <path d="M18 214.300H1810" stroke-dashoffset="2"></path>
          <path d="M18 588.300H1810" stroke-dashoffset="2"></path>
          <path d="M559 690.600H1810"></path>
          <path d="M255 979.500H1810"></path>
          <path d="M560 170V1022" stroke="#5c5c5c" stroke-dasharray="10 5"></path>
        </g>
        <g fill="none" stroke="#fff">
          <path d="M18 313.300H1810" stroke-width="3.600"></path>
          <path d="M990 224.800H1140.500M1070 291.300H1173M989 357.500H1069" stroke-width="2.200"></path>
          <path d="M1043 225L1055.500 380M1091.500 292L1114 457.500" stroke-width="2.300"></path>
        </g>
        <text class="lvl" x="1802" y="174">ONH</text>
        <text class="lvl" x="1802" y="207.500">H (eth)</text>
        <text class="lvl hot" x="1802" y="303.500">H</text>
        <text class="lvl" x="1802" y="581.500">H (day)</text>
        <text class="lvl" x="1802" y="684">ONL</text>
        <text class="lvl" x="1802" y="973">L (day)</text>
        <path d="M1760 972h37.500v25.500l-19 11.500-18.500-11.500z" fill="#1c1c1c" stroke="#555"></path>
        <text class="mid" x="1778.500" y="993">245</text>
      </g>
      <g clip-path="url(#axis)">${PRICES.map((p) => svg`<text x="1814.500" y=${y(p)}>${p}</text>`)}</g>
      <rect x="1814.500" y="325.500" width="58" height="16.500" rx="4" fill="#0a0a0a" stroke="#666"></rect>
      <text x="1818" y="339">3003.25</text>
      <g stroke="#fff" fill="none"><path d="M1818 147.500h19M1818 165.500h19" stroke-width="2.400"></path><path d="M1818 158c1 4 4 4 6 2l7-8c2-2 5-2 6 2" stroke="#ddd" stroke-width="1.300"></path></g>
      ${TIMES.map(([t, x]) => svg`<text class="mid" x=${x} y="1040">${t}</text>`)}
    `;
  }

  render() {
    return html`
      <div class="frame">
        <div class="window">
          <div class="row title">
            ${this.cells([
              { w: 88, pad: 9, cls: "green", body: "Connected" },
              { w: 112, pad: 11, cls: "green", body: "Realtime data", tri: true },
              { w: 122, pad: 11, tri: true, body: html`<span>Jul, 11</span><b>15:50:41</b>` },
              { w: 195, pad: 12, tri: true, body: html`<span>Account:</span><span class="pdt">PDT</span><b class="t1">49*****12 ()</b>` },
            ])}
            <div class="cell fill"></div>
            ${this.cells([
              { w: 133, pad: 14, cls: "green", body: html`${icons.home}<span class="t3">Home Screen</span>` },
              { w: 110, pad: 12, body: html`${icons.mail}<span class="t5" style="margin-left:-3px">Messages</span>` },
              { w: 137, pad: 13, body: html`${icons.headset}<span class="t1">Support/Chat</span>` },
              { w: 86, pad: 13, body: html`${gear()}<span class="t1" style="margin-left:-1px">Setup</span>` },
            ])}
            <div class="wins">
              <div class="win"><svg width="10" height="10"><path d="M0 6.500h10" stroke="#666" stroke-width="2.500"></path></svg></div>
              <div class="win"><svg width="12" height="11"><path d="M.5 1.500h11v8.500h-11zM.5 2.500h11" fill="none" stroke="#777" stroke-width="1.400"></path></svg></div>
              <div class="win close"><svg width="12" height="12"><path d="M1 0l10 11M11 0L1 11" stroke="#8a5a5a" stroke-width="2"></path></svg></div>
            </div>
          </div>
          <div class="row balance">
            ${this.cells([
              { w: 92, pad: 13, body: "Option BP", tri: true, cls: "plain" },
              { w: 122, pad: 8, body: this.star(0) },
              { w: 197, pad: 9.5, body: html`Stock BP${this.star(11)}` },
              { w: 69, pad: 12, body: "Net Liq", tri: true, cls: "plain" },
              { w: 121, pad: 7.5, body: this.star(0) },
              { w: 177, pad: 10, body: html`DTBP${this.star(11)}` },
              { w: 300, pad: 9.5, body: html`Cash &amp; Sweep Vehicle${this.star(9)}`, cls: "plain" },
            ])}
            <div class="fill"></div>
            ${this.cells([{ w: 30, body: gear("#fff", "#0a0a0a", 18), cls: "plain" }])}
          </div>
          <div class="body">
            <div class="gutter">
              <div class="zone" style="height:470px"><span class="grip"></span></div>
              <div class="zone" style="height:70px"><svg width="5" height="8"><path d="M0 0l5 4-5 4z" fill="#888"></path></svg></div>
              <div class="zone" style="height:467px"><span class="grip"></span></div>
            </div>
            <div class="main">
              <div class="row menu">
                ${(
                  [["Monitor", 77], ["Trade", 60], ["Analyze", 74], ["Scan", 54], ["MarketWatch", 108], ["Charts", 66], ["Tools", 58], ["Education", 89], ["Help", 54]] as [string, number][]
                ).map(([t, w]) => html`<div class="cell ${t === "Charts" ? "on" : ""}" style="width:${w}px;padding-left:1px">${t}</div>`)}
                <div class="cell fill"></div>
                ${this.cells([{ w: 128, body: html`${icons.demand}<span style="margin-left:-2px">OnDemand</span>`, cls: "plain" }])}
              </div>
              <div class="row sub">
                ${this.cells([
                  { w: 91, pad: 5, body: html`<div class="pill">${icons.bars}Charts</div>` },
                  { w: 130, pad: 13, cls: "t1", body: html`${icons.grid}<span style="margin-left:-1px">Flexible Grid</span>` },
                  { w: 144, pad: 13, body: html`${icons.depth}<span style="margin-left:-1px">Product Depth</span>` },
                ])}
                <div class="cell fill"></div>
                ${this.cells([
                  { w: 74, pad: 11, tri: true, body: html`<div class="box"></div>` },
                  { w: 43, pad: 14, tri: true, body: list, cls: "plain" },
                ])}
              </div>
              <div class="row tool">
                ${this.cells([
                  { w: 126, pad: 4, cls: "plain", body: html`<div class="symbol">/ES<span class="drop"><svg width="10" height="7"><path d="M0 0h10L5 7z" fill="#aaa"></path></svg></span></div>` },
                  { w: 22, pad: 4, tri: true, body: html`<div class="alert">1</div>` },
                  { w: 300, pad: 13, cls: "t1", body: "E-mini S&P 500 Index Futures,ETH (SEP 19)" },
                  { w: 82, pad: 8, body: html`<b class="last">3003.25</b>` },
                  { w: 53, pad: 8, body: html`<span class="change"><span>+5.75</span><span>+0.19%</span></span>` },
                ])}
                <div class="cell fill"></div>
                ${this.cells([
                  { w: 85, pad: 10, body: html`${icons.share}<span style="margin-left:-1px">Share</span>` },
                  { w: 43, pad: 12, body: flask },
                  { w: 44, pad: 13, body: gear("#fff", "#003b5a", 17) },
                  { w: 51, pad: 12, tri: true, body: html`<span class="tick">512<small>tk</small></span>` },
                  { w: 80, pad: 14, tri: true, cls: "t1", body: html`${icons.style}<span style="margin-left:-2px">Style</span>` },
                  { w: 109, pad: 12, tri: true, cls: "t2", body: html`${icons.line}<span style="margin-left:-1px">Drawings</span>` },
                  { w: 96, pad: 13, tri: true, body: html`${flask}<span style="margin-left:-2px">Studies</span>` },
                  { w: 107, pad: 12, tri: true, cls: "t1", body: html`${icons.patterns}<span style="margin-left:-1px">Patterns</span>` },
                  { w: 44, pad: 14, tri: true, body: list, cls: "plain" },
                ])}
              </div>
              <div class="work">
                <div class="chartcol">
                  <div class="row status">
                    ${this.cells([
                      { w: 90, pad: 3.5, body: html`<b class="t1">/ES 5 D 512t</b>` },
                      { w: 131, pad: 4, cls: "t3", body: "D: 7/11/19 3:50 PM" },
                      { w: 79, pad: 4, body: "O: 3002.75" },
                      { w: 78, pad: 5, body: "H: 3003.25" },
                      { w: 74, pad: 4, body: "L: 3002.75" },
                      { w: 77, pad: 4, body: "C: 3003.25" },
                      { w: 46, pad: 4, body: "R: 0.5" },
                      { w: 61, pad: 4, body: html`<span style="letter-spacing:0">Volume</span>` },
                      { w: 34, pad: 4, body: "713" },
                    ])}
                  </div>
                  <svg class="plot" width="1887" height="905" viewBox="0 144 1887 905">${this.plot()}</svg>
                  <div class="row foot">
                    <div class="track">
                      <svg width="9" height="16"><path d="M9 4.500v7L5 8z" fill="#777"></path></svg>
                      <div class="lift"><svg width="11" height="13"><path d="M0 1.200h11" stroke="#fff" stroke-width="2.200"></path><path d="M0 12L5.500 5 11 12z" fill="#fff"></path></svg></div>
                      <div class="thumb"><svg width="7" height="8"><path d="M.5 0v8M3.500 0v8M6.500 0v8" stroke="#777"></path></svg></div>
                      <svg width="32" height="16"><path d="M10 4.500v7L6 8zM23 4.500v7L27 8z" fill="#777"></path></svg>
                    </div>
                    <div class="controls cell plain tri" style="padding-left:5px">
                      <svg width="20" height="14"><path d="M7 1v12L1 7zM13 1v12l6-6z" fill="#fff"></path><path d="M9 3v8M11 3v8" stroke="#ccc"></path></svg>
                      <svg width="16" height="16" fill="none" stroke="#eee" stroke-width="1.400"><circle cx="8" cy="8" r="6.500"></circle><path d="M8 0v16M0 8h16"></path></svg>
                      <svg width="20" height="21" fill="none" stroke="#eee" stroke-width="1.500"><circle cx="8.500" cy="8.500" r="7.500"></circle><path d="M5.500 8.500h6M8.500 5.500v6"></path><path d="M14 14l5.500 6" stroke-width="2.500"></path></svg>
                      <svg width="20" height="21" fill="none" stroke="#262626" stroke-width="1.500"><circle cx="8.500" cy="8.500" r="7.500"></circle><path d="M5.500 8.500h6"></path><path d="M14 14l5.500 6" stroke-width="2.500"></path></svg>
                      ${icons.line}
                      <span class="t1" style="margin-left:9px">Drawing set: Price Levels</span>
                    </div>
                  </div>
                </div>
                <div class="side">
                  ${(
                    [["Trade", 60], ["Times And Sales", 128], ["Active Trader", 107], ["Big Buttons", 99], ["Chart", 58], ["Phase Scores", 108], ["Dashboard", 95], ["Level II", 69], ["Live News", 89]] as [string, number][]
                  ).map(([t, h]) => html`<div class="tab ${t === "Chart" ? "on" : ""}" style="height:${h}px"><span>${t}</span></div>`)}
                </div>
              </div>
            </div>
          </div>
        </div>
        <div class="edge"></div>
      </div>
      <div class="desk"><div class="strip"></div></div>
    `;
  }
}
